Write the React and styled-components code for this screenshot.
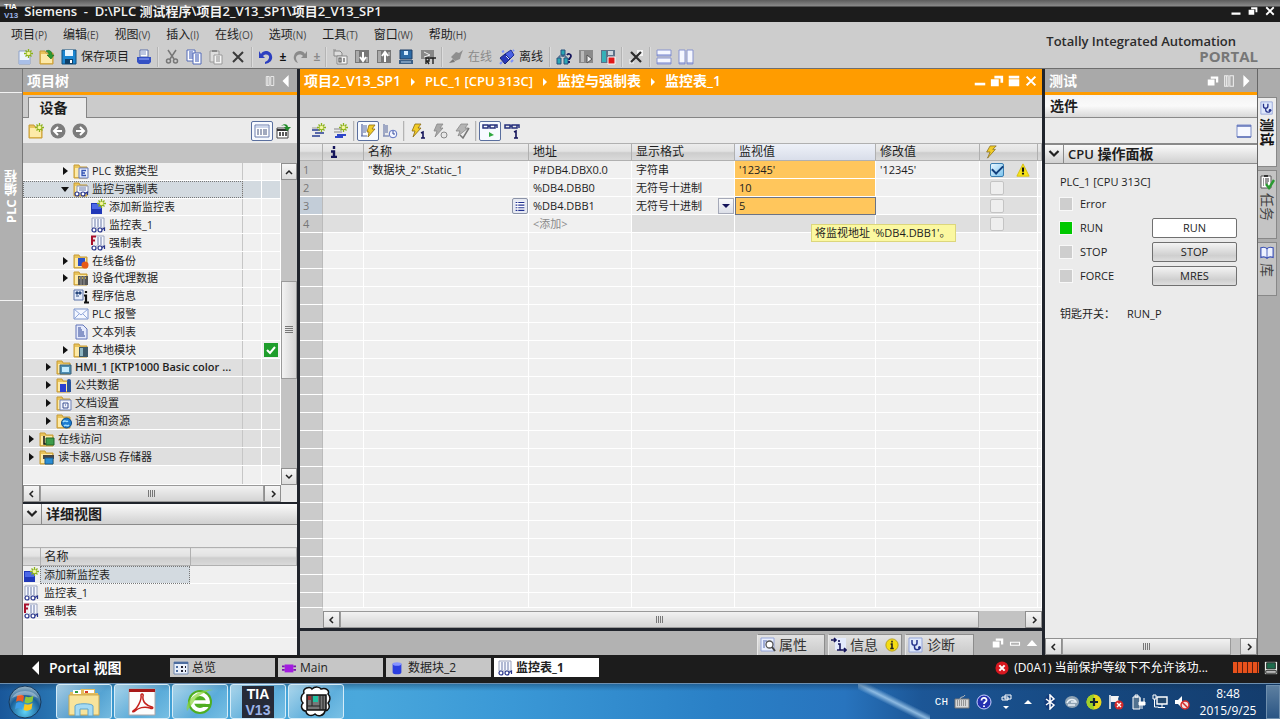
import React from "react"
import styled, { createGlobalStyle, css } from "styled-components"

const GlobalStyle = createGlobalStyle`
  * {
    box-sizing: border-box;
  }

  body {
    margin: 0;
    background-color: #1c1c1c;
    color: #1e1e1e;
    font-family: "Open Sans", "Noto Sans CJK SC", sans-serif;
    font-size: 11px;
    line-height: 16px;
  }

  button, select, input {
    margin: 0;
    padding: 0;
    border: 0;
    background: none;
    color: inherit;
    font: inherit;
  }

  a {
    color: inherit;
    text-decoration: none;
  }

  ul {
    list-style: none;
    margin: 0;
    padding: 0;
  }

  svg {
    display: block;
    flex: none;
  }
`

/* ---------- drawings ---------- */

const folder = (
  <>
    <path d="M1 2h5l1 2h7v11H1z" fill="#e9c45c" stroke="#c79b34" />
    <path d="M2 5h11v9H2z" fill="#fdeaa8" />
  </>
)
const star = (
  <>
    <path d="M11.500 0v9M7 4.500h9M8.500 1.500l6 6M14.500 1.500l-6 6" stroke="#8cb31a" strokeWidth="1.300" />
    <circle cx="11.500" cy="4.500" r="1.800" fill="#f6f6a0" />
  </>
)
const glasses = (
  <g fill="#fff" stroke="#26338c" strokeWidth="1.200">
    <circle cx="4" cy="13" r="2" />
    <circle cx="10" cy="13" r="2" />
    <path d="M12 12.500l2.500-1.500v3" fill="none" />
  </g>
)
const sheet = (
  <>
    <path d="M2 1h12v10H2z" fill="#f7f9ff" stroke="#9aa3bd" />
    <path d="M4 3h2M7 3h2M10 3h2M4 5h2M7 5h2M10 5h2M4 7h2M7 7h2M10 7h2M4 9h2M7 9h2M10 9h2" stroke="#6b7aa8" />
  </>
)
const bolt = (a, b) => <path d="M7 1h7l-4 4h3L4 15l3-7H3z" fill={a} stroke={b} strokeWidth=".8" />
const specs = (
  <g fill="none" stroke="#26307c" strokeWidth="1.500">
    <path d="M1 2h5v3H1zM8 2h5v3H8zM6 3h2M13 2h2v3" />
  </g>
)

const drawings = {
  newProject: (
    <>
      <path d="M2 2h8l3 3v10H2z" fill="#eef4ff" stroke="#8ba0c8" />
      <path d="M2 11h11v4H2z" fill="#a9bfe8" />
      {star}
    </>
  ),
  open: (
    <>
      {folder}
      <path d="M7 2c4-2 6 1 6 4h2l-3 4-4-4h2c0-2-1-3-3-4z" fill="#2a9a30" stroke="#14651a" strokeWidth=".6" />
    </>
  ),
  save: (
    <>
      <path d="M1 1h14v14H1z" fill="#1c86d0" stroke="#12507f" />
      <path d="M4 1h8v6H4z" fill="#e8f6ff" />
      <path d="M4 10h8v5H4z" fill="#0f3f66" />
      <path d="M9 11h2v3H9z" fill="#fff" />
    </>
  ),
  print: (
    <>
      <path d="M4 1h8v7H4z" fill="#fff" stroke="#5a6ea8" />
      <path d="M5 3h5M5 5h5" stroke="#7f91c4" />
      <path d="M1 8h14v5l-2 2H3l-2-2z" fill="#3551c4" />
      <path d="M3 10h10" stroke="#9db0ff" />
    </>
  ),
  cut: (
    <g fill="none" stroke="#777" strokeWidth="1.500">
      <path d="M4 1l6 9M12 1L6 10" />
      <circle cx="4.500" cy="12" r="2" />
      <circle cx="11.500" cy="12" r="2" />
    </g>
  ),
  copy: (
    <>
      <path d="M1 1h8v11H1z" fill="#fff" stroke="#5169b8" />
      <path d="M3 3h4M3 5h4M3 7h4M3 9h4" stroke="#3350b0" />
      <path d="M7 4h8v11H7z" fill="#fff" stroke="#5169b8" />
      <path d="M9 6h4M9 8h4M9 10h4M9 12h4" stroke="#3350b0" />
    </>
  ),
  paste: (
    <>
      <path d="M2 2h9v11H2z" fill="#ddd" stroke="#999" />
      <path d="M4 1h5v2H4z" fill="#888" />
      <path d="M6 6h8v9H6z" fill="#f6f6f6" stroke="#999" />
      <path d="M8 8h4M8 10h4M8 12h4" stroke="#888" />
    </>
  ),
  cross: <path d="M3 3l10 10M13 3L3 13" stroke="#3a3a3a" strokeWidth="2" />,
  undo: <path d="M1 2v7h6L5 7c3-3 7-1 6 2-.5 2-2 3-4 4v2c5-1 8-4 7-8-1-5-8-7-11-2z" fill="#2c3fc0" />,
  redo: <path d="M15 2v7H9l2-2c-3-3-7-1-7 2 0 2 1 3 2 5-3-1-5-4-4-7 1-5 8-7 11-2z" fill="#8a8a8a" />,
  compile: (
    <>
      <path d="M2 2h6l2 2v3H2zM1 1h3" fill="#ddd" stroke="#888" />
      <path d="M5 7h10v8H5z" fill="#f4f4f4" stroke="#888" />
      <path d="M7 9h2v4H7zM12 9v4" fill="none" stroke="#555" strokeWidth="1.200" />
    </>
  ),
  download: (
    <>
      <path d="M1 1h14v13H1z" fill="#777" />
      <path d="M2 2h3v11H2zM12 8h2v5h-2z" fill="#aaa" />
      <path d="M9 3v9M6 8l3 4 3-4" fill="none" stroke="#fff" strokeWidth="2" />
    </>
  ),
  upload: (
    <>
      <path d="M1 1h14v13H1z" fill="#777" />
      <path d="M2 2h3v11H2zM12 3h2v4h-2z" fill="#aaa" />
      <path d="M9 13V4M6 7l3-4 3 4" fill="none" stroke="#fff" strokeWidth="2" />
    </>
  ),
  simulate: (
    <>
      <path d="M2 1h12v9H2z" fill="#2d6ba6" stroke="#1e3f66" />
      <path d="M6 2h4v4H6z" fill="#d5ecff" />
      <path d="M1 11h14v4H1z" fill="#3b5f86" />
      <path d="M3 13h10" stroke="#b5d2ee" />
    </>
  ),
  runtime: (
    <>
      <path d="M1 1h13v9H1z" fill="#888" />
      <path d="M4 3l6 3-6 2" fill="none" stroke="#eee" />
      <path d="M6 15V9h3v3H6M9 15l-2-3M10 9h6M13 9v6" stroke="#222" strokeWidth="1.400" fill="none" />
    </>
  ),
  plugGrey: (
    <>
      <path d="M3 8l5-5 3 1 4-3-2 5-1 4-5 2z" fill="#8e8e8e" />
      <path d="M1 14l4-4 2 3z" fill="#777" />
    </>
  ),
  plugBlue: (
    <>
      <path d="M6 5l6-4 3 5-5 5z" fill="#4b62e4" stroke="#202f98" />
      <path d="M1 9l5-4 5 5-5 5z" fill="#2838b8" stroke="#18237a" />
      <path d="M3 3l2-1M12 13l2-2M1 15l2-2M14 2l1-1" stroke="#7a90ff" strokeWidth="2" />
      <path d="M7 7l3 3" stroke="#dfe6ff" />
    </>
  ),
  devices: (
    <>
      <path d="M5 1h4v5H5zM1 9h4v6H1zM8 9h4v6H8z" fill="#2aa6b4" stroke="#26507c" />
      <path d="M7 6v2M3 9V7h7v2" stroke="#26507c" fill="none" />
      <path d="M11 6c1-2 4-1 4 1s-2 2-2 4M13 12v2" stroke="#14145a" strokeWidth="1.800" fill="none" />
    </>
  ),
  startCpu: (
    <>
      <path d="M1 1h14v13H1z" fill="#8a8a8a" />
      <path d="M3 2h3v11H3z" fill="#b9b9b9" />
      <path d="M9 6l5 4-5 4z" fill="#eee" stroke="#555" />
    </>
  ),
  stopCpu: (
    <>
      <path d="M1 1h14v13H1z" fill="#5d7288" />
      <path d="M2 2h4v11H2z" fill="#35b0b8" />
      <path d="M8 2h5v4H8z" fill="#cdd6de" />
      <path d="M8 8h7v7H8z" fill="#e01818" stroke="#fff" />
    </>
  ),
  crossRef: (
    <>
      <path d="M9 1h6v6H9z" fill="#f4f4f4" />
      <path d="M1 10h5v5H1z" fill="#e2e2e2" />
      <path d="M3 3l10 10M13 3L3 13" stroke="#2c2c2c" strokeWidth="2.200" />
    </>
  ),
  splitH: (
    <>
      <path d="M1 1h14v6H1zM1 9h14v6H1z" fill="#f5f7ff" stroke="#8793cf" />
      <path d="M1 6h14M1 14h14" stroke="#6f7fca" />
    </>
  ),
  splitV: (
    <>
      <path d="M1 1h6v14H1zM9 1h6v14H9z" fill="#f5f7ff" stroke="#8793cf" />
      <path d="M1 14h6M9 14h6" stroke="#6f7fca" />
    </>
  ),
  newFolder: (
    <>
      {folder}
      {star}
    </>
  ),
  back: (
    <>
      <circle cx="8" cy="8" r="7.500" fill="#7c7c7c" />
      <path d="M12 8H5M8 4L4 8l4 4" fill="none" stroke="#fff" strokeWidth="2" />
    </>
  ),
  forward: (
    <>
      <circle cx="8" cy="8" r="7.500" fill="#7c7c7c" />
      <path d="M4 8h7M8 4l4 4-4 4" fill="none" stroke="#fff" strokeWidth="2" />
    </>
  ),
  listView: (
    <>
      <path d="M1 2h14v12H1z" fill="#fff" stroke="#6d7fae" />
      <path d="M1 4h14" stroke="#9db0da" />
      <path d="M3 7h2M6 7h2M9 7h4M3 9h2M6 9h2M9 9h4M3 11h2M6 11h2M9 11h4" stroke="#44557f" />
    </>
  ),
  exportList: (
    <>
      <path d="M1 5h11v10H1z" fill="#fff" stroke="#444" />
      <path d="M1 7h11" stroke="#333" strokeWidth="2" />
      <path d="M3 10h2M6 10h2M9 10h2M3 12h2M6 12h2M9 12h2" stroke="#222" strokeWidth="1.400" />
      <path d="M5 3c3-3 7-2 7 1h3l-4 4-3-4h2c-1-2-3-2-5-1z" fill="#208a28" />
    </>
  ),
  insertRow: (
    <>
      <path d="M2 7h8M5 10h9M2 13h8" stroke="#5868a8" strokeWidth="1.800" />
      <path d="M2 5h6" stroke="#999" />
      {star}
    </>
  ),
  addRow: (
    <>
      <path d="M2 6h8M2 9h8" stroke="#888" strokeWidth="1.200" />
      <path d="M5 12h9M3 14h8" stroke="#2e46c8" strokeWidth="1.800" />
      {star}
    </>
  ),
  modifyAll: (
    <>
      <path d="M2 1v12M1 13h6M3 3h4M3 5h4M3 7h4M3 9h3" stroke="#5566a0" strokeWidth="1.200" />
      <path d="M9 2h6l-3 4h3l-7 8 1-5H7z" fill="#f2cc28" stroke="#8a6a10" strokeWidth=".8" />
    </>
  ),
  modifyTimer: (
    <>
      <path d="M2 1v12M1 13h6M3 3h3M3 5h3M3 7h3M3 9h3" stroke="#8792b8" strokeWidth="1.500" />
      <circle cx="11" cy="11" r="3.800" fill="#f4f6ff" stroke="#5a6fc0" />
      <path d="M11 8v3h2" stroke="#334a9c" fill="none" />
    </>
  ),
  boltOnce: (
    <>
      <path d="M5 1h6L8 5h3l-8 9 2-6H2z" fill="#f2cc28" stroke="#8a6a10" strokeWidth=".8" />
      <path d="M11 10l2-1v6M11 15h4" stroke="#14145a" strokeWidth="1.600" fill="none" />
    </>
  ),
  boltTimer: (
    <>
      <path d="M5 1h6L8 5h3l-8 9 2-6H2z" fill="#aaa" stroke="#888" strokeWidth=".8" />
      <circle cx="12" cy="12" r="3" fill="#e6e6e6" stroke="#888" />
    </>
  ),
  boltForce: (
    <>
      <path d="M7 1h7l-3 4h3L4 13l2-5H2z" fill="#b4b4b4" stroke="#888" strokeWidth=".8" />
      <path d="M6 12l3 3 6-10" fill="none" stroke="#777" strokeWidth="1.500" />
    </>
  ),
  bolt: bolt("#f2cc28", "#7d651a"),
  monitorAll: (
    <>
      {specs}
      <path d="M7 9l5 3-5 2z" fill="#30a840" />
    </>
  ),
  monitorOnce: (
    <>
      {specs}
      <path d="M10 9l2-1v7M10 15h4" stroke="#14145a" strokeWidth="1.600" fill="none" />
    </>
  ),
  types: (
    <>
      {folder}
      <path d="M6 5h9v10H6z" fill="#e8eefc" stroke="#6379bc" />
      <path d="M13 7.500H9v5h4M9 10h3" fill="none" stroke="#3454b4" strokeWidth="1.300" />
    </>
  ),
  watchFolder: (
    <>
      {folder}
      <path d="M4 5h11v7H4z" fill="#f7f9ff" stroke="#8d97b4" />
      <path d="M6 7h7M6 9h7" stroke="#6b7aa8" />
      {glasses}
    </>
  ),
  addWatch: (
    <>
      <path d="M1 4h11v11H1z" fill="#2038b8" />
      <path d="M2 5h9v5H2z" fill="#4c68e6" />
      {star}
    </>
  ),
  watch: (
    <>
      {sheet}
      {glasses}
    </>
  ),
  force: (
    <>
      {sheet}
      <path d="M1 0h5v11H1z" fill="#efefef" />
      <path d="M2 10V1M1 1.500h5M2 5.500h3" stroke="#a8102c" strokeWidth="2" />
      {glasses}
    </>
  ),
  backup: (
    <>
      {folder}
      <path d="M5 5h7v8H5z" fill="#2c50c8" />
      <circle cx="12" cy="12" r="3.500" fill="#e65a18" />
    </>
  ),
  proxy: (
    <>
      {folder}
      <path d="M5 6h10v9H5z" fill="#555" />
      <path d="M6 8h1M9 8h1M12 8h1" stroke="#e2c040" strokeWidth="1.500" />
      <path d="M8 6v9M11 6v9" stroke="#999" />
    </>
  ),
  programInfo: (
    <>
      <path d="M1 2h9v10H1z" fill="#e6edfb" stroke="#5a73a8" />
      <path d="M3 4h2v2H3zM6 4h2v2H6zM3 8h3" fill="#29497f" stroke="#29497f" />
      <path d="M13 3v2M11 7.500h2V14M11 14.500h5" stroke="#111" strokeWidth="2.200" fill="none" />
    </>
  ),
  mail: (
    <>
      <path d="M1 3h14v10H1z" fill="#f4f8ff" stroke="#7b94cc" />
      <path d="M1 3l7 6 7-6M1 13l5-5M15 13l-5-5" fill="none" stroke="#8fa6da" />
    </>
  ),
  textList: (
    <>
      <path d="M3 1h7l4 4v10H3z" fill="#e4e9fb" stroke="#6275b8" />
      <path d="M5 4h3M5 6h4M5 8h6M5 10h6M5 12h7" stroke="#2c4496" />
    </>
  ),
  modules: (
    <>
      {folder}
      <path d="M6 5h9v10H6z" fill="#3e5a6a" />
      <path d="M7 6h3v8H7z" fill="#8fb6c2" />
    </>
  ),
  hmi: (
    <>
      {folder}
      <path d="M4 6h11v9H4z" fill="#4e90b4" stroke="#3a6078" />
      <path d="M6 8h7v5H6z" fill="#c4ecff" />
    </>
  ),
  common: (
    <>
      {folder}
      <path d="M4 7h6v8H4z" fill="#2b3fd0" />
      <path d="M11 5h4v10h-4z" fill="#28539c" />
      <circle cx="13" cy="4" r="2" fill="#28539c" />
    </>
  ),
  docs: (
    <>
      {folder}
      <path d="M4 5h11v10H4z" fill="#eef1fb" stroke="#7383b6" />
      <path d="M7 8h5v5H7zM9 10h1" fill="none" stroke="#3b4e90" />
    </>
  ),
  globe: (
    <>
      {folder}
      <circle cx="10.500" cy="10" r="5" fill="#1c7cd0" stroke="#0d4b88" />
      <path d="M7 9c2-3 3 1 5-1M8 13c2-2 3 1 5-1" stroke="#9fe0ff" strokeWidth="1.500" fill="none" />
    </>
  ),
  access: (
    <>
      {folder}
      <path d="M5 5v8h3" fill="none" stroke="#111" strokeWidth="1.500" />
      <path d="M7 7h8v7H7z" fill="#3f9c4a" stroke="#23642a" />
    </>
  ),
  reader: (
    <>
      {folder}
      <path d="M4 6h11v4H4z" fill="#444" />
      <path d="M6 9h8v6H6z" fill="#2b8ed4" stroke="#1a5a90" />
    </>
  ),
  overview: (
    <>
      <path d="M1 2h14v12H1z" fill="#e9f0fb" stroke="#7088b0" />
      <path d="M1 3h14" stroke="#4c6da0" strokeWidth="2" />
      <path d="M3 6h2v2H3zM3 10h2v2H3z" fill="#4c6da0" />
      <path d="M8 6h2v2H8zM12 6h1v2h-1zM8 10h2v2H8zM12 10h1v2h-1z" fill="#223" />
    </>
  ),
  block: (
    <>
      <path d="M3 4h10v9H3z" fill="#a31be0" />
      <path d="M0 6h3M0 10h3M13 6h3M13 10h3" stroke="#7a10b0" strokeWidth="2" />
    </>
  ),
  database: (
    <>
      <path d="M3 3h10v10c0 3-10 3-10 0z" fill="#2b3fe0" />
      <ellipse cx="8" cy="3.500" rx="5" ry="2" fill="#8795ff" />
    </>
  ),
  properties: (
    <>
      <path d="M1 1h13v13H1z" fill="#eaf0ff" stroke="#93a4d8" />
      <path d="M3 4h4M3 6h2M3 8h2M3 10h2" stroke="#5568b0" />
      <circle cx="9.500" cy="7.500" r="3.500" fill="#fff" stroke="#555" strokeWidth="1.300" />
      <path d="M12 10l3 4" stroke="#444" strokeWidth="2" />
    </>
  ),
  info: (
    <>
      <path d="M4 1h11v12H4z" fill="#e3eafc" />
      <path d="M0 3h5M3 1l2 2-2 2M10 13h5M13 11l2 2-2 2M8 3v2M7 7h2v6M6 13h5" stroke="#14145a" strokeWidth="1.600" fill="none" />
    </>
  ),
  infoBadge: (
    <>
      <circle cx="8" cy="8" r="7" fill="#f4dc14" stroke="#b39c10" />
      <path d="M8 3v2M6.500 7H8v5M6 12h4" stroke="#222" strokeWidth="1.800" fill="none" />
    </>
  ),
  diagnostics: (
    <>
      <path d="M1 1h13v14H1z" fill="#dfe8fb" stroke="#93a4d8" />
      <path d="M4 3v3c0 3 5 3 5 0V3M6.500 8v2c0 4 5 3 5 1" fill="none" stroke="#26338c" strokeWidth="1.500" />
      <circle cx="11.500" cy="10.500" r="1.500" fill="#26338c" />
    </>
  ),
  tasks: (
    <>
      <path d="M2 2h10v12H2z" fill="#fff" stroke="#555" />
      <path d="M5 1h4v2H5z" fill="#333" />
      <path d="M4 5h1M6 5h4M4 7h1M6 7h4M4 9h1M6 9h3M4 11h1" stroke="#333" />
      <path d="M7 10l3 4 5-8" fill="none" stroke="#2a9a30" strokeWidth="2.400" />
    </>
  ),
  library: (
    <>
      <path d="M1 2c3-1 5-1 7 1 2-2 4-2 7-1v11c-3-1-5-1-7 1-2-2-4-2-7-1z" fill="#eef2ff" stroke="#3a50b4" strokeWidth="1.300" />
      <path d="M8 3v11" stroke="#3a50b4" />
    </>
  ),
  pane: (
    <>
      <path d="M1 2h14v12H1z" fill="#f6f8ff" stroke="#7d8dc8" />
      <path d="M1 3h14M1 14h14" stroke="#5d70b8" strokeWidth="1.500" />
    </>
  ),
  warning: (
    <>
      <path d="M8 1l7 14H1z" fill="#f8e416" stroke="#d3bd08" />
      <path d="M8 5v5M8 11v2" stroke="#111" strokeWidth="2.400" />
    </>
  ),
  picker: (
    <>
      <path d="M3 3h10v10H3z" fill="#fff" />
      <path d="M3 4h2M6 4h7M3 7h2M6 7h7M3 10h2M6 10h7M3 13h2M6 13h7" stroke="#203090" strokeWidth="1.200" />
    </>
  ),
  restore: <path d="M5 2h10v8h-3V5H5zM1 6h9v8H1z" fill="#fff" />,
  minimize: <path d="M2 10h12v3H2z" fill="#fff" />,
  maximize: <path d="M2 2h12v3H2zM2 6h12v8H2z" fill="#fff" />,
  closeWhite: <path d="M3 3l10 10M13 3L3 13" stroke="#fff" strokeWidth="2.400" />,
  columns: <path d="M3 2h4v12H3zM9 2h4v12H9zM5 2v12" fill="none" stroke="#eee" strokeWidth="1.200" />,
  bar: <path d="M2 7h12v4H2z" fill="none" stroke="#fff" strokeWidth="1.500" />,
  triLeft: <path d="M11 1v14L4 8z" fill="#fff" />,
  triRight: <path d="M5 1v14l7-7z" fill="#fff" />,
  triUp: <path d="M1 12h14L8 4z" fill="#fff" />,
  error: (
    <>
      <circle cx="8" cy="8" r="7.500" fill="#d81820" />
      <path d="M5 5l6 6M11 5l-6 6" stroke="#fff" strokeWidth="2.400" />
    </>
  ),
  computer: (
    <>
      <path d="M1 1h14v14H1z" fill="#e8efe8" />
      <path d="M3 2h10v7H3z" fill="#1e6b4c" stroke="#222" />
      <path d="M2 11h12v3H2z" fill="#ccc" stroke="#222" />
    </>
  ),
  keyboard: (
    <>
      <path d="M1 5h14v9H1z" fill="#d8d8d8" stroke="#777" />
      <path d="M3 7h10M3 9h10M3 11h10" stroke="#555" strokeDasharray="1 1" />
      <path d="M6 5c0-3 4-1 5-4" stroke="#bbb" fill="none" />
    </>
  ),
  help: (
    <>
      <circle cx="8" cy="8" r="7" fill="#2430b0" stroke="#c9d0ff" />
      <path d="M5.500 6.500c0-4 5.500-3 5 0-.3 1.500-2.500 1.500-2.500 3.500M8 11.500v1.500" stroke="#fff" strokeWidth="1.800" fill="none" />
    </>
  ),
  langBar: (
    <>
      <path d="M7 1h6v4H7zM4 3h6v3H4z" fill="#1c4f8a" stroke="#fff" />
      <path d="M5 12h6l-3 3z" fill="#fff" />
    </>
  ),
  trayUp: <path d="M4 10h8L8 6z" fill="#fff" />,
  bluetooth: (
    <>
      <ellipse cx="8" cy="8" rx="5.500" ry="7.500" fill="#123a78" />
      <path d="M4 5l8 6-4 4V1l4 4-8 6" fill="none" stroke="#fff" strokeWidth="1.500" />
    </>
  ),
  sync: (
    <>
      <ellipse cx="8" cy="8" rx="7" ry="6" fill="#8fa3b4" />
      <path d="M3 9c2-5 8-4 9-1H7M4 11h7" stroke="#e8f0f6" strokeWidth="1.600" fill="none" />
    </>
  ),
  guard: (
    <>
      <circle cx="8" cy="8" r="7.500" fill="#e8d71c" />
      <path d="M8 .5a7.500 7.500 0 0 0 0 15z" fill="#9fd02a" />
      <path d="M8 4v8M4 8h8" stroke="#123" strokeWidth="2.200" />
    </>
  ),
  flag: (
    <>
      <path d="M2 1v14" stroke="#fff" strokeWidth="1.500" />
      <path d="M3 2h8l-1 3 1 3H3z" fill="#f4f4f4" />
      <circle cx="11" cy="11" r="4.500" fill="#d42a2a" />
      <path d="M9 9l4 4M13 9l-4 4" stroke="#fff" strokeWidth="1.400" />
    </>
  ),
  battery: (
    <>
      <path d="M3 3h7v12H3zM5 1h3v2H5z" fill="#51718f" stroke="#fff" />
      <path d="M10 4v4M14 4v4M9 8h6v3H9zM12 11v4" stroke="#fff" fill="#fff" />
    </>
  ),
  network: (
    <>
      <path d="M5 3h10v7H5z" fill="#24496e" stroke="#fff" strokeWidth="1.400" />
      <path d="M10 10v3M6 13.500h7M1 1h3v4H1zM2.500 5v8h4" stroke="#fff" fill="none" />
    </>
  ),
  mute: (
    <>
      <path d="M1 6h3l4-4v12l-4-4H1z" fill="#fff" />
      <circle cx="11" cy="11" r="4" fill="#f3dcdc" stroke="#d42a2a" strokeWidth="1.500" />
      <path d="M8 8l6 6" stroke="#d42a2a" strokeWidth="1.500" />
    </>
  ),
}

const Icon = ({ name, size = 16 }) => (
  <svg width={size} height={size} viewBox="0 0 16 16" fill="none" aria-hidden="true">
    {drawings[name]}
  </svg>
)

/* ---------- window frame ---------- */

const Shell = styled.div`
  display: flex;
  flex-direction: column;
  min-height: 100vh;
  background-color: #1c1c1c;
`

const TitleBar = styled.header`
  display: flex;
  align-items: center;
  gap: 6px;
  height: 22px;
  padding: 0 4px;
  background: linear-gradient(#5c5c5c, #8a8a8a 6px, #1c1c1c 7px);
  color: #f2f2f2;
  font-size: 13px;
  font-weight: 600;
  white-space: pre;

  h1 {
    flex: 1;
    margin: 0;
    font: inherit;
  }

  button {
    display: block;
  }
`

const TiaMark = styled.span`
  display: flex;
  flex-direction: column;
  font-family: "Liberation Sans", sans-serif;
  font-size: ${(p) => p.$size}px;
  font-weight: 700;
  line-height: ${(p) => p.$line}px;
  color: #fff;

  span + span {
    color: #9db4e8;
  }
`

const TopArea = styled.div`
  display: flex;
  justify-content: space-between;
  background-color: #cdcdcd;
  border-bottom: 1px solid #6e6e6e;
`

const MenuBar = styled.nav`
  display: flex;
  gap: 16px;
  padding: 5px 11px 3px;
  font-size: 12px;

  span {
    font-size: 10px;
    color: #444;
  }
`

const ToolRow = styled.div`
  display: flex;
  align-items: center;
  height: ${(p) => p.$height || 22}px;
  padding: 0 ${(p) => p.$pad || 7}px;
  font-size: 12px;
`

const ToolButton = styled.button`
  display: flex;
  align-items: center;
  justify-content: center;
  min-width: 22px;
  height: 22px;
  ${(p) =>
    p.$label &&
    css`
      padding: 0 4px 0 1px;
      color: ${p.$dim ? "#8a8a8a" : "#1e1e1e"};
    `}
  ${(p) =>
    p.$pressed &&
    css`
      height: 20px;
      border: 1px solid #5a6f9e;
      border-radius: 2px;
      background-color: #f7faff;
    `}
`

const DropMark = styled.button`
  width: 12px;
  font-weight: 700;
  color: ${(p) => (p.$dim ? "#8a8a8a" : "#111")};
`

const Divider = styled.span`
  width: 2px;
  height: 20px;
  margin: 0 2px;
  border-left: 1px solid #b4b4b4;
  border-right: 1px solid #dcdcdc;
`

const Brand = styled.div`
  padding: 11px 22px 0 0;
  font-size: 13px;
  font-weight: 600;
  line-height: 16px;
  color: #2b2b2b;

  strong {
    display: block;
    font-size: 15px;
    font-weight: 700;
    line-height: 14px;
    text-align: right;
    color: #777;
  }
`

const BrandName = styled.span`
  margin-right: 22px;
`

const Workspace = styled.main`
  flex: 1;
  display: grid;
  grid-template-columns: 23px 274px minmax(0, 1fr) 212px 23px;
  min-height: 0;
`

const SideStrip = styled.aside`
  display: flex;
  flex-direction: column;
  background-color: #b0b0b0;
  border-right: 1px solid #777;

  &::before {
    content: "";
    height: 23px;
    border-bottom: 1px solid #f2f2f2;
    background-color: #a6a6a6;
  }
`

const StripLabel = styled.button`
  display: flex;
  align-items: center;
  justify-content: center;
  height: 208px;
  border-bottom: 1px solid #f2f2f2;
  color: #fff;
  font-size: 13px;
  font-weight: 700;

  span {
    writing-mode: vertical-rl;
    transform: rotate(180deg);
  }
`

const Column = styled.section`
  display: flex;
  flex-direction: column;
  min-width: 0;
  background-color: #ebebeb;
  ${(p) =>
    p.$framed &&
    css`
      border: solid #20242c;
      border-width: 0 3px;
    `}
`

const PanelHead = styled.div`
  display: flex;
  align-items: center;
  height: 26px;
  padding: 0 4px;
  background-color: ${(p) => (p.$active ? "#ff9c00" : "#a9a9a9")};
  border-bottom: 3px solid #ff9c00;
  color: #fff;
  font-size: 14px;
  font-weight: 700;

  h2 {
    flex: 1;
    margin: 0;
    font: inherit;
  }

  button {
    margin-left: 3px;
  }
`

const Crumbs = styled.nav`
  display: flex;
  align-items: center;
  gap: 10px;
  flex: 1;
  font-weight: 600;

  a + a::before {
    content: "";
    display: inline-block;
    margin: 0 10px 0 0;
    border: solid transparent;
    border-width: 4px 0 4px 4px;
    border-left-color: #fff;
  }
`

const Crumb = styled.a`
  font-size: ${(p) => (p.$latin ? 13 : 14)}px;
`

const TabRow = styled.div`
  display: flex;
  align-items: flex-end;
  height: 23px;
  padding: 0 5px;
  background-color: #cbcbcb;
  border-bottom: 1px solid #858585;

  button {
    width: 59px;
    height: 21px;
    margin-bottom: -1px;
    padding-right: 8px;
    border: 1px solid #858585;
    border-bottom: 0;
    background-color: #ebebeb;
    font-size: 14px;
    font-weight: 700;
  }
`

const Spacer = styled.span`
  flex: 1;
`

const GreyBand = styled.div`
  height: 20px;
  background-color: #c3c3c3;
`

/* ---------- scroll bars ---------- */

const Scroll = styled.div`
  display: flex;
  flex-direction: ${(p) => (p.$vertical ? "column" : "row")};
  ${(p) => (p.$vertical ? "width: 16px;" : "height: 17px; flex: none;")}
  background-color: #c3c3c3;
`

const ScrollButton = styled.button`
  display: flex;
  align-items: center;
  justify-content: center;
  flex: none;
  width: ${(p) => (p.$vertical ? 16 : 17)}px;
  height: 17px;
  border: 1px solid #8f8f8f;
  background: linear-gradient(#f6f6f6, #dcdcdc);
`

const Thumb = styled.div`
  display: flex;
  align-items: center;
  justify-content: center;
  flex: ${(p) => p.$grow};
  border: 1px solid #9a9a9a;
  background: linear-gradient(${(p) => (p.$vertical ? "90deg" : "180deg")}, #f2f2f2, #d4d4d4);

  &::after {
    content: "";
    width: 8px;
    height: 7px;
    background: repeating-linear-gradient(
      ${(p) => (p.$vertical ? "180deg" : "90deg")},
      #777 0 1px,
      transparent 1px 2px
    );
  }
`

const Gap = styled.div`
  flex: ${(p) => p.$grow};
`

const chevrons = {
  up: "M1 6l3-3 3 3",
  down: "M1 2l3 3 3-3",
  left: "M5 1L2 4l3 3",
  right: "M3 1l3 3-3 3",
}

const Chevron = ({ to, size = 8 }) => (
  <svg width={size} height={size} viewBox="0 0 8 8" fill="none" aria-hidden="true">
    <path d={chevrons[to]} stroke="#222" strokeWidth="1.500" />
  </svg>
)

const HScroll = ({ thumb = 1, rest = 0 }) => (
  <Scroll>
    <ScrollButton aria-label="向左滚动">
      <Chevron to="left" />
    </ScrollButton>
    <Thumb $grow={thumb} />
    {rest > 0 && <Gap $grow={rest} />}
    <ScrollButton aria-label="向右滚动">
      <Chevron to="right" />
    </ScrollButton>
  </Scroll>
)

/* ---------- project tree ---------- */

const TreeArea = styled.div`
  display: flex;
  flex: 1;
  min-height: 0;
`

const Tree = styled.ul`
  flex: 1;
  display: grid;
  grid-template-rows: repeat(17, minmax(0, 1fr)) 19px;
  background-color: #f0f0f0;
`

const TreeRow = styled.li`
  display: grid;
  grid-template-columns: 1fr 19px 19px;
  border-bottom: 1px solid #fff;
  background-color: ${(p) => (p.$selected ? "#d3dae0" : p.$shade ? "#dfdfdf" : "#f0f0f0")};
  overflow: hidden;
`

const TreeName = styled.a`
  display: flex;
  align-items: center;
  min-width: 0;
  padding-left: ${(p) => p.$level * 17}px;
  border-right: 1px solid #c6c6c6;
  white-space: nowrap;
  font-weight: ${(p) => (p.$strong ? 600 : 400)};
  ${(p) => p.$selected && "outline: 1px dotted #777; outline-offset: -1px;"}

  svg {
    margin-right: 3px;
  }
`

const Twisty = styled.span`
  display: flex;
  justify-content: center;
  width: 16px;

  &::before {
    content: "";
    border: solid transparent;
    ${(p) => p.$state === "closed" && "border-width: 4px 0 4px 5px; border-left-color: #111;"}
    ${(p) => p.$state === "open" && "border-width: 5px 4px 0 4px; border-top-color: #111;"}
  }
`

const TreeCell = styled.span`
  display: flex;
  align-items: center;
  justify-content: center;
  border-right: 1px solid #fff;
`

const OkMark = () => (
  <svg width="14" height="14" viewBox="0 0 14 14" fill="none" aria-hidden="true">
    <path d="M0 0h14v14H0z" fill="#1f9e2c" />
    <path d="M3 7l3 3 5-6" stroke="#fff" strokeWidth="2" />
  </svg>
)

const nodes = [
  { level: 2, icon: "types", text: "PLC 数据类型", state: "closed" },
  { level: 2, icon: "watchFolder", text: "监控与强制表", state: "open", selected: true },
  { level: 3, icon: "addWatch", text: "添加新监控表" },
  { level: 3, icon: "watch", text: "监控表_1" },
  { level: 3, icon: "force", text: "强制表" },
  { level: 2, icon: "backup", text: "在线备份", state: "closed" },
  { level: 2, icon: "proxy", text: "设备代理数据", state: "closed" },
  { level: 2, icon: "programInfo", text: "程序信息" },
  { level: 2, icon: "mail", text: "PLC 报警" },
  { level: 2, icon: "textList", text: "文本列表" },
  { level: 2, icon: "modules", text: "本地模块", state: "closed", ok: true },
  { level: 1, icon: "hmi", text: "HMI_1 [KTP1000 Basic color ...", state: "closed", shade: true, strong: true },
  { level: 1, icon: "common", text: "公共数据", state: "closed", shade: true },
  { level: 1, icon: "docs", text: "文档设置", state: "closed", shade: true },
  { level: 1, icon: "globe", text: "语言和资源", state: "closed", shade: true },
  { level: 0, icon: "access", text: "在线访问", state: "closed", shade: true },
  { level: 0, icon: "reader", text: "读卡器/USB 存储器", state: "closed", shade: true },
]

const HScrollLine = styled.div`
  display: grid;
  grid-template-columns: 1fr 16px;
`

const SectionHead = styled.h3`
  display: flex;
  align-items: center;
  height: 21px;
  margin: 0;
  border: solid #8a8a8a;
  border-width: ${(p) => (p.$lined ? "2px" : 0)} 0 1px;
  background: linear-gradient(#fafafa, #d0d0d0);
  font-size: 14px;
  font-weight: 700;

  button {
    display: flex;
    align-items: center;
    justify-content: center;
    width: 19px;
    height: 100%;
    margin-right: 4px;
    border-right: 1px solid #8a8a8a;
  }

  span {
    font-size: 13px;
    font-weight: 600;
  }
`

const Details = styled.div`
  height: 153px;
  border-top: 2px solid #20242c;
  background-color: #ebebeb;
  overflow: hidden;
`

const headFill = css`
  background: linear-gradient(#ececec, #e2e2e2 45%, #cdcdcd 55%, #dadada);
`

const DetailsTable = styled.table`
  width: 100%;
  margin-top: 22px;
  border-collapse: collapse;
  table-layout: fixed;
  background-color: #f0f0f0;

  tr {
    height: 18px;
  }

  th {
    ${headFill}
    padding: 0 4px;
    border: solid #b0b0b0;
    border-width: 1px 1px 1px 0;
    font-weight: 400;
    font-size: 12px;
    line-height: 15px;
    text-align: left;
  }

  td {
    padding: 0;
    border-bottom: 1px solid #fff;
  }

  td + td {
    padding-left: 4px;
  }
`

const MarkedCell = styled.td`
  ${(p) => p.$selected && "background-color: #d3dae0; outline: 1px dotted #777; outline-offset: -1px;"}
`

/* ---------- watch table ---------- */

const EditorBand = styled.div`
  height: 23px;
  background-color: #cbcbcb;
  border-bottom: 1px solid #858585;
`

const TableArea = styled.div`
  flex: 1;
  min-height: 0;
  background: linear-gradient(90deg, #cbcbcb 23px, #f0f0f0 23px);
`

const WatchTable = styled.table`
  width: 100%;
  border-collapse: separate;
  border-spacing: 0;
  table-layout: fixed;

  th {
    ${headFill}
    height: 18px;
    padding: 0 4px;
    border: solid #b0b0b0;
    border-width: 1px 1px 1px 0;
    font-size: 12px;
    font-weight: 400;
    line-height: 14px;
    text-align: left;
  }

  td {
    height: 18px;
    padding: 0 4px;
    border: solid #fff;
    border-width: 0 1px 1px 0;
    background-color: #f0f0f0;
    line-height: 16px;
    white-space: nowrap;
  }

  td:first-child {
    padding-left: 3px;
    background-color: #cbcbcb;
    border-right-color: #bbb;
    color: #777;
  }

  tr[aria-selected="true"] td:first-child {
    background-color: #c3cdd8;
  }

  tr:last-child td {
    height: 15px;
  }
`

const HeadCell = styled.th`
  ${(p) => p.$hot && "&& { background: linear-gradient(#eef1f8, #d9deea); }"}
`

const Cell = styled.td`
  ${(p) => p.$grey && "&& { background-color: #dfdfdf; }"}
  ${(p) => p.$live && "&& { background-color: #ffc65c; }"}
  ${(p) => p.$focus && "&& { position: relative; outline: 1px solid #6b7385; outline-offset: -1px; }"}
  ${(p) => p.$dim && "&& { color: #8a8a8a; }"}
  ${(p) => p.$flush && "&& { padding: 0; }"}
`

const EndButton = styled.button`
  display: flex;
  align-items: center;
  justify-content: center;
  width: 16px;
  height: 16px;
  margin-left: auto;
  border: 1px solid #8b93a8;
  border-radius: 2px;
  background-color: #e6e9f2;
`

const FormatField = styled.label`
  position: relative;
  display: flex;
  align-items: center;
  height: 16px;

  select {
    flex: 1;
    height: 16px;
    padding-left: 4px;
    appearance: none;
    outline: 0;
  }

  span {
    display: flex;
    align-items: center;
    justify-content: center;
    width: 16px;
    height: 16px;
    border: 1px solid #a5a9b8;
    background: linear-gradient(#fafafa, #dcdfe8);
    pointer-events: none;
  }

  span::before {
    content: "";
    border: solid transparent;
    border-width: 4px 4px 0;
    border-top-color: #14145a;
  }
`

const Flags = styled.div`
  display: flex;
  align-items: center;
  gap: 12px;
  padding-left: 6px;
`

const Tick = styled.input`
  display: grid;
  place-items: center;
  appearance: none;
  width: 14px;
  height: 14px;
  border: 1px solid #c4c4c4;
  border-radius: 2px;
  background-color: #eee;

  &:checked {
    border-color: #3c7fb1;
    background: linear-gradient(135deg, #e8f6ff, #7cc4ee);
  }

  &:checked::before {
    content: "";
    width: 9px;
    height: 5px;
    margin-top: -3px;
    border: solid #123f7c;
    border-width: 0 0 2px 2px;
    transform: rotate(-45deg);
  }
`

const Tooltip = styled.div`
  position: absolute;
  top: 27px;
  left: 76px;
  z-index: 1;
  padding: 0 4px 0 3px;
  border: 1px solid #dcd67c;
  background-color: #fbf8a0;
  line-height: 16px;
`

const Footing = styled.div`
  display: grid;
  grid-template-columns: 23px 1fr;
  background-color: #cbcbcb;
`

const InspectorTabs = styled.div`
  display: flex;
  align-items: flex-end;
  justify-content: flex-end;
  gap: 3px;
  height: 27px;
  border-top: 3px solid #20242c;
  background-color: #b2b2b2;
  padding-right: 4px;
`

const InspectorTab = styled.button`
  display: flex;
  align-items: center;
  gap: 3px;
  width: ${(p) => p.$width}px;
  height: 21px;
  padding: 0 2px;
  border: 1px solid #8c8c8c;
  border-bottom: 0;
  border-left-color: #e8e8e8;
  background: linear-gradient(#e2e2e2, #c9c9c9);
  font-size: 14px;
  color: #333;

  svg:last-child:not(:first-child) {
    margin-left: auto;
  }
`

const TabTools = styled.div`
  display: flex;
  gap: 5px;
  margin-left: 15px;
  align-self: center;
`

/* ---------- test panel ---------- */

const PanelTitle = styled.h3`
  height: 23px;
  margin: 0;
  padding: 0 5px;
  border-bottom: 1px solid #8a8a8a;
  background: linear-gradient(#f4f4f4, #fafafa 50%, #d8d8d8);
  font-size: 14px;
  font-weight: 700;
  line-height: 22px;
`

const PaneTools = styled.div`
  display: flex;
  justify-content: flex-end;
  align-items: center;
  height: 25px;
  padding: 0 5px;
`

const Operator = styled.div`
  flex: 1;
  padding: 10px 15px;
`

const LampGrid = styled.div`
  display: grid;
  grid-template-columns: 14px 1fr 85px;
  grid-auto-rows: 20px;
  column-gap: 6px;
  row-gap: 4px;
  align-items: center;
  margin-top: 4px;
  padding-right: 5px;
`

const Lamp = styled.span`
  grid-column: 1;
  width: 14px;
  height: 14px;
  margin-left: -1px;
  border: 1px solid #f8f8f8;
  background-color: ${(p) => (p.$on ? "#00c800" : "#cecece")};
`

const LampText = styled.span`
  grid-column: 2;
  padding-bottom: 1px;
`

const CpuButton = styled.button`
  grid-column: 3;
  height: 20px;
  border: 1px solid #707070;
  border-radius: 2px;
  background: ${(p) => (p.$on ? "#fff" : "linear-gradient(#f4f4f4, #cfcfcf 70%, #dedede)")};
`

const KeySwitch = styled.dl`
  display: flex;
  gap: 12px;
  margin: 20px 0 0;

  dd {
    margin: 0;
  }
`

const RightTabs = styled.nav`
  display: flex;
  flex-direction: column;
  gap: 3px;
  padding-top: 28px;
  background-color: #acacac;
  border-left: 1px solid #666;
`

const SideTab = styled.button`
  display: flex;
  flex-direction: column;
  align-items: center;
  gap: 3px;
  width: 19px;
  height: ${(p) => p.$height}px;
  padding-top: 3px;
  border: 1px solid #888;
  border-left: 0;
  background-color: ${(p) => (p.$active ? "#ededed" : "#c4c4c4")};
  color: ${(p) => (p.$active ? "#111" : "#444")};
  font-size: 14px;
  font-weight: ${(p) => (p.$active ? 700 : 400)};

  span {
    writing-mode: vertical-rl;
    text-orientation: sideways;
  }
`

/* ---------- bottom bars ---------- */

const PortalBar = styled.footer`
  display: flex;
  align-items: center;
  gap: 3px;
  height: 28px;
  padding: 0 2px 3px 28px;
  color: #fff;
`

const PortalLink = styled.button`
  display: flex;
  align-items: center;
  gap: 5px;
  width: 139px;
  font-size: 14px;
  font-weight: 600;
`

const EditorTab = styled.button`
  display: flex;
  align-items: center;
  gap: 3px;
  width: 105px;
  height: 19px;
  padding: 0 3px;
  background-color: ${(p) => (p.$active ? "#fff" : "#c6c6c6")};
  color: #222;
  font-size: 12px;
  font-weight: ${(p) => (p.$active ? 700 : 400)};

  svg {
    width: 16px;
  }
`

const Message = styled.div`
  display: flex;
  align-items: center;
  gap: 5px;
  margin-left: auto;
  font-size: 12px;
`

const Activity = styled.span`
  width: 26px;
  height: 11px;
  margin: 0 2px 0 22px;
  background: repeating-linear-gradient(90deg, #e8521c 0 4px, #5c2010 4px 5px);
`

const Taskbar = styled.div`
  display: flex;
  align-items: center;
  height: 36px;
  border-top: 1px solid #6d8fb0;
  background:
    linear-gradient(#10305066, #10305000 7px),
    linear-gradient(to top right, #a8d0f000 42%, #a8d0f0cc 50%, #a8d0f000 58%) 71% 0 / 72px 36px no-repeat,
    linear-gradient(90deg, #19579a, #3f9fd4 10%, #4aa8dc 28%, #3a98d6 40%, #2a80c6 56%, #2874be 66%, #1c5696 72%, #164880 85%, #143c6c);
`

const StartButton = styled.button`
  width: 34px;
  height: 34px;
  margin: 0 14px 0 8px;
`

const AppButton = styled.button`
  display: flex;
  align-items: center;
  justify-content: center;
  width: 56px;
  height: 35px;
  margin-right: 2px;
  border: 1px solid #d5ecf8;
  border-radius: 3px;
  background: linear-gradient(135deg, #c4e2f0cc, #6fb4dc88 60%, #9ad2ec99);
`

const TiaTile = styled.span`
  width: 32px;
  height: 32px;
  background-color: #262b38;
`

const Tray = styled.div`
  display: flex;
  align-items: center;
  gap: 6px;
  margin-left: auto;
  color: #fff;

  > span {
    font-family: "Liberation Mono", monospace;
    font-size: 11px;
  }
`

const Clock = styled.time`
  width: 64px;
  font-size: 12px;
  line-height: 17px;
  text-align: center;
`

const ShowDesktop = styled.button`
  align-self: stretch;
  width: 14px;
  border: 1px solid #6f8fae;
  background: linear-gradient(#5d7fa0, #2a5584);
`

const WindowsOrb = () => (
  <svg width="34" height="34" viewBox="0 0 34 34" aria-hidden="true">
    <defs>
      <radialGradient id="orb" cx=".5" cy=".8" r=".8">
        <stop offset="0" stopColor="#5fd4f8" />
        <stop offset=".6" stopColor="#1a5f98" />
        <stop offset="1" stopColor="#9fb8c8" />
      </radialGradient>
    </defs>
    <circle cx="17" cy="17" r="16" fill="url(#orb)" stroke="#16395c" />
    <path d="M9 11c3-2 5-1 7 0l-1 6c-2-1-4-2-7 0z" fill="#ee5a24" />
    <path d="M17.500 11.500c3 1 5 1 8-1l-1 6c-3 2-5 2-8 1z" fill="#8cc63e" />
    <path d="M8 18.500c3-2 5-1 7 0l-1 6c-2-1-4-2-7 0z" fill="#3f9ee8" />
    <path d="M16.500 19c3 1 5 1 8-1l-1 6c-3 2-5 2-8 1z" fill="#fbc71e" />
    <path d="M4 13a14 11 0 0 1 26 0c-8-4-18-4-26 0z" fill="#fff" opacity=".35" />
  </svg>
)

const ExplorerIcon = () => (
  <svg width="34" height="30" viewBox="0 0 34 30" aria-hidden="true">
    <path d="M3 5h9l2-3h14v4h3v22H3z" fill="#e4bc5c" />
    <path d="M6 3h8v4H6zM17 3h10v3H17z" fill="#fff" />
    <path d="M8 4h3v2H8z" fill="#2f9e40" />
    <path d="M18 4h3v2h-3z" fill="#d83a2a" />
    <path d="M2 8h30v20H2z" fill="#f8e49c" stroke="#cfa94c" />
    <path d="M8 29V19c0-3 18-3 18 0v10h-5v-7h-8v7z" fill="#a4daf4" stroke="#5fa4cc" />
  </svg>
)

const ReaderIcon = () => (
  <svg width="28" height="28" viewBox="0 0 28 28" fill="none" aria-hidden="true">
    <path d="M1 1h26v26H1z" fill="#fdfdfd" stroke="#b0a8a8" />
    <path d="M1 1h26v3H1z" fill="#a81818" />
    <path
      d="M5 23c4-2 9-11 8-16 0-2 3-1 2 1-1 6 4 10 9 11 2 1 0 2-2 1-6-2-12 0-15 3-1 1-3 1-2 0z"
      stroke="#c4201c"
      strokeWidth="1.500"
    />
  </svg>
)

const BrowserIcon = () => (
  <svg width="30" height="30" viewBox="0 0 30 30" fill="none" aria-hidden="true">
    <circle cx="15" cy="15" r="12" fill="#4fae20" />
    <circle cx="15" cy="15" r="8" stroke="#fff" strokeWidth="4" />
    <path d="M8 15h15" stroke="#fff" strokeWidth="3.500" />
    <path d="M17 17h9v3h-9z" fill="#4fae20" />
    <path d="M2 24C-1 14 14 1 28 3c-8 1-16 6-20 13" fill="#8cd63c" opacity=".7" />
  </svg>
)

const PlcIcon = () => (
  <svg width="32" height="32" viewBox="0 0 32 32" aria-hidden="true">
    <path
      d="M4 7c-2-5 6-7 8-4 3-3 8-2 9 0 5-2 9 2 7 5 3 3 2 7 0 9 3 4 0 8-3 8-1 5-7 6-10 3-4 3-9 1-9-3-4 0-6-5-3-8-3-3-2-8 1-10z"
      fill="#fff"
      stroke="#111"
      strokeWidth="1.500"
    />
    <path d="M7 9h19v15H7z" fill="#777" stroke="#111" strokeWidth="1.500" />
    <path d="M12 9v11M20 9v15M23 9v15M7 20h13" stroke="#222" />
    <path d="M13 10h5v6h-5z" fill="#20c0a0" />
    <path d="M8 10h3v4H8z" fill="#a03030" />
  </svg>
)

const menus = [
  ["项目", "P"],
  ["编辑", "E"],
  ["视图", "V"],
  ["插入", "I"],
  ["在线", "O"],
  ["选项", "N"],
  ["工具", "T"],
  ["窗口", "W"],
  ["帮助", "H"],
]

const Tool = ({ icon, label, ...rest }) => (
  <ToolButton aria-label={label || icon} {...rest}>
    <Icon name={icon} />
  </ToolButton>
)

const MainToolbar = () => (
  <ToolRow $pad={14}>
    <Tool icon="newProject" />
    <Tool icon="open" />
    <Tool icon="save" />
    <ToolButton $label>保存项目</ToolButton>
    <Tool icon="print" />
    <Divider />
    <Tool icon="cut" />
    <Tool icon="copy" />
    <Tool icon="paste" />
    <Tool icon="cross" />
    <Divider />
    <Tool icon="undo" />
    <DropMark>±</DropMark>
    <Tool icon="redo" />
    <DropMark $dim>±</DropMark>
    <Divider />
    <Tool icon="compile" />
    <Tool icon="download" />
    <Tool icon="upload" />
    <Tool icon="simulate" />
    <Tool icon="runtime" />
    <Divider />
    <Tool icon="plugGrey" />
    <ToolButton $label $dim>在线</ToolButton>
    <Tool icon="plugBlue" />
    <ToolButton $label>离线</ToolButton>
    <Divider />
    <Tool icon="devices" />
    <Tool icon="startCpu" />
    <Tool icon="stopCpu" />
    <Divider />
    <Tool icon="crossRef" />
    <Divider />
    <Tool icon="splitH" />
    <Tool icon="splitV" />
  </ToolRow>
)

const ProjectTree = () => (
  <Column>
    <PanelHead>
      <h2>项目树</h2>
      <button aria-label="列"><Icon name="columns" size={12} /></button>
      <button aria-label="折叠"><Icon name="triLeft" size={14} /></button>
    </PanelHead>
    <TabRow>
      <button>设备</button>
    </TabRow>
    <ToolRow $height={25} $pad={2}>
      <Tool icon="newFolder" />
      <Tool icon="back" />
      <Tool icon="forward" />
      <Spacer />
      <Tool icon="listView" $pressed />
      <Tool icon="exportList" />
    </ToolRow>
    <GreyBand />
    <TreeArea>
      <Tree>
        {nodes.map((n) => (
          <TreeRow key={n.text} $selected={n.selected} $shade={n.shade}>
            <TreeName href="#" $level={n.level} $selected={n.selected} $strong={n.strong}>
              <Twisty $state={n.state} />
              <Icon name={n.icon} />
              {n.text}
            </TreeName>
            <TreeCell />
            <TreeCell>{n.ok && <OkMark />}</TreeCell>
          </TreeRow>
        ))}
        <TreeRow>
          <TreeName as="span" $level={0} />
          <TreeCell />
          <TreeCell />
        </TreeRow>
      </Tree>
      <Scroll $vertical>
        <ScrollButton $vertical aria-label="向上滚动">
          <Chevron to="up" />
        </ScrollButton>
        <Gap $grow={102} />
        <Thumb $vertical $grow={96} />
        <Gap $grow={90} />
        <ScrollButton $vertical aria-label="向下滚动">
          <Chevron to="down" />
        </ScrollButton>
      </Scroll>
    </TreeArea>
    <HScrollLine>
      <HScroll />
    </HScrollLine>
    <Details>
      <SectionHead>
        <button aria-label="折叠详细视图"><Chevron to="down" size={12} /></button>
        详细视图
      </SectionHead>
      <DetailsTable>
        <colgroup>
          <col style={{ width: 17 }} />
          <col style={{ width: 150 }} />
          <col />
        </colgroup>
        <thead>
          <tr>
            <th />
            <th>名称</th>
            <th />
          </tr>
        </thead>
        <tbody>
          {nodes.slice(2, 5).map((n, i) => (
            <tr key={n.text}>
              <td><Icon name={n.icon} /></td>
              <MarkedCell $selected={i === 0}>{n.text}</MarkedCell>
              <td />
            </tr>
          ))}
          <tr><td colSpan={3} /></tr>
          <tr><td colSpan={3} /></tr>
        </tbody>
      </DetailsTable>
    </Details>
  </Column>
)

const colWidths = [23, 41, 165, 103, 103, 141, null, 58, 4]

const emptyRows = Array.from({ length: 21 }, (_, i) => i)

const WatchEditor = () => (
  <Column $framed>
    <PanelHead $active>
      <Crumbs>
        <Crumb href="#">项目2_V13_SP1</Crumb>
        <Crumb href="#" $latin>PLC_1 [CPU 313C]</Crumb>
        <Crumb href="#">监控与强制表</Crumb>
        <Crumb href="#">监控表_1</Crumb>
      </Crumbs>
      <button aria-label="最小化"><Icon name="minimize" size={14} /></button>
      <button aria-label="还原"><Icon name="restore" size={14} /></button>
      <button aria-label="最大化"><Icon name="maximize" size={14} /></button>
      <button aria-label="关闭"><Icon name="closeWhite" size={14} /></button>
    </PanelHead>
    <EditorBand />
    <ToolRow $height={25}>
      <Tool icon="insertRow" />
      <Tool icon="addRow" />
      <Divider />
      <Tool icon="modifyAll" $pressed />
      <Tool icon="modifyTimer" />
      <Divider />
      <Tool icon="boltOnce" />
      <Tool icon="boltTimer" />
      <Tool icon="boltForce" />
      <Divider />
      <Tool icon="monitorAll" $pressed />
      <Tool icon="monitorOnce" />
    </ToolRow>
    <TableArea>
      <WatchTable>
        <colgroup>
          {colWidths.map((w, i) => (
            <col key={i} style={w ? { width: w } : undefined} />
          ))}
        </colgroup>
        <thead>
          <tr>
            <HeadCell />
            <HeadCell>
              <svg width="14" height="12" viewBox="0 0 14 12" fill="none" aria-hidden="true">
                <path d="M7 0v3M4 5.500h3V10M4 11h6" stroke="#14145a" strokeWidth="2.400" />
              </svg>
            </HeadCell>
            <HeadCell>名称</HeadCell>
            <HeadCell>地址</HeadCell>
            <HeadCell>显示格式</HeadCell>
            <HeadCell $hot>监视值</HeadCell>
            <HeadCell>修改值</HeadCell>
            <HeadCell><Icon name="bolt" size={14} /></HeadCell>
            <HeadCell />
          </tr>
        </thead>
        <tbody>
          <tr>
            <td>1</td>
            <Cell $grey />
            <td>"数据块_2".Static_1</td>
            <td>P#DB4.DBX0.0</td>
            <td>字符串</td>
            <Cell $live>'12345'</Cell>
            <td>'12345'</td>
            <Cell $grey>
              <Flags>
                <Tick type="checkbox" defaultChecked aria-label="修改 1" />
                <Icon name="warning" size={14} />
              </Flags>
            </Cell>
            <td />
          </tr>
          <tr>
            <td>2</td>
            <Cell $grey />
            <td />
            <td>%DB4.DBB0</td>
            <td>无符号十进制</td>
            <Cell $live>10</Cell>
            <td />
            <Cell $grey>
              <Flags><Tick type="checkbox" aria-label="修改 2" /></Flags>
            </Cell>
            <td />
          </tr>
          <tr aria-selected="true">
            <td>3</td>
            <Cell $grey />
            <Cell $flush>
              <EndButton aria-label="选择变量"><Icon name="picker" size={14} /></EndButton>
            </Cell>
            <td>%DB4.DBB1</td>
            <Cell $flush>
              <FormatField>
                <select aria-label="显示格式" defaultValue="dec">
                  <option value="dec">无符号十进制</option>
                </select>
                <span />
              </FormatField>
            </Cell>
            <Cell $live $focus>
              5
              <Tooltip role="tooltip">将监视地址 '%DB4.DBB1'。</Tooltip>
            </Cell>
            <td />
            <Cell $grey>
              <Flags><Tick type="checkbox" aria-label="修改 3" /></Flags>
            </Cell>
            <td />
          </tr>
          <tr>
            <td>4</td>
            <Cell $grey />
            <td />
            <Cell $dim>&lt;添加&gt;</Cell>
            <Cell $grey />
            <Cell $grey />
            <Cell $grey />
            <Cell $grey>
              <Flags><Tick type="checkbox" aria-label="修改 4" /></Flags>
            </Cell>
            <td />
          </tr>
          {emptyRows.map((r) => (
            <tr key={r}>
              {colWidths.map((_, c) => (
                <td key={c} />
              ))}
            </tr>
          ))}
        </tbody>
      </WatchTable>
    </TableArea>
    <Footing>
      <span />
      <HScroll thumb={639} rest={46} />
    </Footing>
    <InspectorTabs>
      <InspectorTab $width={68}><Icon name="properties" />属性</InspectorTab>
      <InspectorTab $width={74}><Icon name="info" />信息<Icon name="infoBadge" size={14} /></InspectorTab>
      <InspectorTab $width={69}><Icon name="diagnostics" />诊断</InspectorTab>
      <TabTools>
        <Icon name="restore" size={12} />
        <Icon name="bar" size={12} />
        <Icon name="triUp" size={12} />
      </TabTools>
    </InspectorTabs>
  </Column>
)

const TestPanel = () => (
  <Column>
    <PanelHead>
      <h2>测试</h2>
      <button aria-label="还原"><Icon name="restore" size={12} /></button>
      <button aria-label="列"><Icon name="columns" size={14} /></button>
      <button aria-label="折叠"><Icon name="triRight" size={14} /></button>
    </PanelHead>
    <PanelTitle>选件</PanelTitle>
    <PaneTools>
      <button aria-label="窗格"><Icon name="pane" /></button>
    </PaneTools>
    <SectionHead $lined>
      <button aria-label="折叠操作面板"><Chevron to="down" size={12} /></button>
      <div><span>CPU</span> 操作面板</div>
    </SectionHead>
    <Operator>
      <div>PLC_1 [CPU 313C]</div>
      <LampGrid>
        <Lamp />
        <LampText>Error</LampText>
        <Lamp $on />
        <LampText>RUN</LampText>
        <CpuButton $on>RUN</CpuButton>
        <Lamp />
        <LampText>STOP</LampText>
        <CpuButton>STOP</CpuButton>
        <Lamp />
        <LampText>FORCE</LampText>
        <CpuButton>MRES</CpuButton>
      </LampGrid>
      <KeySwitch>
        <dt>钥匙开关：</dt>
        <dd>RUN_P</dd>
      </KeySwitch>
    </Operator>
    <HScroll thumb={168} rest={9} />
  </Column>
)

const App = () => (
  <>
    <GlobalStyle />
    <Shell>
      <TitleBar>
        <TiaMark $size={8} $line={9}>
          <span>TIA</span>
          <span>V13</span>
        </TiaMark>
        <h1>{"Siemens  -  D:\\PLC 测试程序\\项目2_V13_SP1\\项目2_V13_SP1"}</h1>
        <button aria-label="最小化"><Icon name="minimize" size={12} /></button>
        <button aria-label="还原"><Icon name="restore" size={10} /></button>
        <button aria-label="关闭"><Icon name="closeWhite" size={12} /></button>
      </TitleBar>
      <TopArea>
        <div>
          <MenuBar>
            {menus.map(([text, key]) => (
              <a href="#" key={key}>
                {text}
                <span>({key})</span>
              </a>
            ))}
          </MenuBar>
          <MainToolbar />
        </div>
        <Brand>
          <BrandName>Totally Integrated Automation</BrandName>
          <strong>PORTAL</strong>
        </Brand>
      </TopArea>
      <Workspace>
        <SideStrip>
          <StripLabel><span>PLC 编程</span></StripLabel>
        </SideStrip>
        <ProjectTree />
        <WatchEditor />
        <TestPanel />
        <RightTabs>
          <SideTab $height={70} $active><Icon name="diagnostics" size={14} /><span>测试</span></SideTab>
          <SideTab $height={69}><Icon name="tasks" /><span>任务</span></SideTab>
          <SideTab $height={54}><Icon name="library" size={14} /><span>库</span></SideTab>
        </RightTabs>
      </Workspace>
      <PortalBar>
        <PortalLink><Icon name="triLeft" />Portal 视图</PortalLink>
        <EditorTab><Icon name="overview" />总览</EditorTab>
        <EditorTab><Icon name="block" size={14} />Main</EditorTab>
        <EditorTab><Icon name="database" size={14} />数据块_2</EditorTab>
        <EditorTab $active><Icon name="watch" />监控表_1</EditorTab>
        <Message>
          <Icon name="error" size={14} />
          (D0A1) 当前保护等级下不允许该功...
        </Message>
        <Activity />
        <Icon name="computer" size={14} />
      </PortalBar>
      <Taskbar>
        <StartButton aria-label="开始"><WindowsOrb /></StartButton>
        <AppButton aria-label="资源管理器"><ExplorerIcon /></AppButton>
        <AppButton aria-label="阅读器"><ReaderIcon /></AppButton>
        <AppButton aria-label="浏览器"><BrowserIcon /></AppButton>
        <AppButton>
          <TiaTile>
            <TiaMark $size={14} $line={16}>
              <span>TIA</span>
              <span>V13</span>
            </TiaMark>
          </TiaTile>
        </AppButton>
        <AppButton aria-label="仿真"><PlcIcon /></AppButton>
        <Tray>
          <span>CH</span>
          <Icon name="keyboard" />
          <Icon name="help" />
          <Icon name="langBar" />
          <Icon name="trayUp" />
          <Icon name="bluetooth" />
          <Icon name="sync" />
          <Icon name="guard" />
          <Icon name="flag" />
          <Icon name="battery" />
          <Icon name="network" />
          <Icon name="mute" />
          <Clock>
            8:48
            <br />
            2015/9/25
          </Clock>
          <ShowDesktop aria-label="显示桌面" />
        </Tray>
      </Taskbar>
    </Shell>
  </>
)

export default App
